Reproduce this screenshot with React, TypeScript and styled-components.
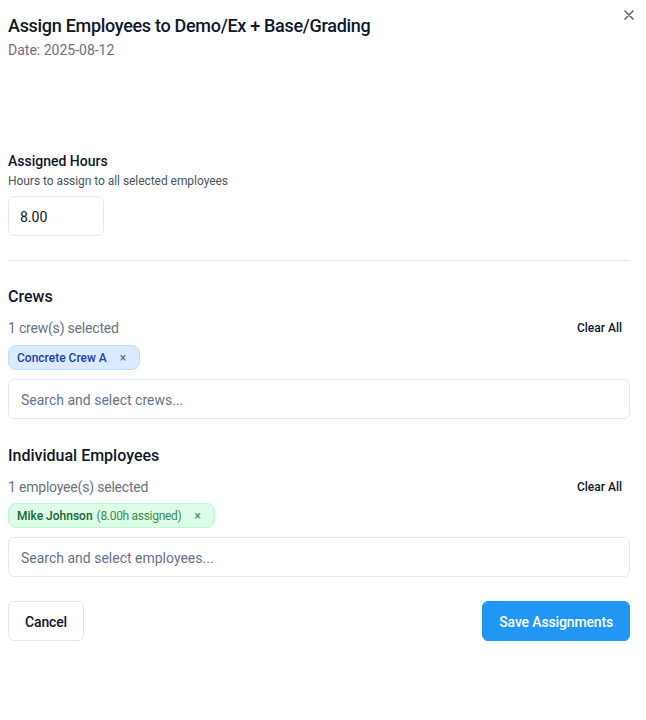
import React from "react";
import styled, { createGlobalStyle } from "styled-components";

const Global = createGlobalStyle`
  html, body { margin: 0; padding: 0; background: #ffffff; }
  body { font-family: Roboto, "Noto Sans", sans-serif; color: #0f172a; }
  * { box-sizing: border-box; }
`;

const Dialog = styled.div`
  position: relative;
  width: 646px;
  padding: 12px 16px 40px 8px;
  display: flex;
  flex-direction: column;
`;

const Close = styled.button`
  position: absolute;
  top: 7px;
  right: 9px;
  width: 16px;
  height: 16px;
  padding: 0;
  border: none;
  background: transparent;
  display: flex;
  align-items: center;
  justify-content: center;
  color: #4b5563;
`;

const Title = styled.h2`
  margin: 0;
  font-size: 18px;
  line-height: 28px;
  font-weight: 500;
  letter-spacing: -0.3px;
  color: #0f172a;
`;

const DateLine = styled.p`
  margin: 0;
  font-size: 14px;
  line-height: 20px;
  color: #6b7280;
`;

const Field = styled.div<{ $top: number }>`
  margin-top: ${(p) => p.$top}px;
  display: flex;
  flex-direction: column;
`;

const Label = styled.label`
  font-size: 14px;
  line-height: 20px;
  font-weight: 500;
  color: #0f172a;
`;

const Hint = styled.span`
  margin-top: 2px;
  font-size: 12px;
  line-height: 16px;
  letter-spacing: -0.05px;
  color: #4b5563;
`;

const HoursInput = styled.div`
  margin-top: 7px;
  width: 96px;
  height: 40px;
  border: 1px solid #e2e8f0;
  border-radius: 6px;
  padding: 1px 11px 0;
  display: flex;
  align-items: center;
  font-size: 14px;
  color: #0f172a;
`;

const Divider = styled.hr`
  margin: 24px 0 0;
  border: none;
  border-top: 1px solid #e2e8f0;
  width: 100%;
`;

const SectionTitle = styled.h3<{ $top: number }>`
  margin: ${(p) => p.$top}px 0 0;
  font-size: 16px;
  line-height: 24px;
  font-weight: 500;
  color: #0f172a;
`;

const CountRow = styled.div<{ $top: number }>`
  margin-top: ${(p) => p.$top}px;
  display: flex;
  align-items: center;
  justify-content: space-between;
  height: 20px;
`;

const Count = styled.span`
  font-size: 14px;
  line-height: 20px;
  letter-spacing: -0.2px;
  color: #6b7280;
`;

const ClearAll = styled.button`
  border: none;
  background: transparent;
  padding: 0 8px 0 0;
  font-family: inherit;
  font-size: 12px;
  font-weight: 500;
  color: #0f172a;
`;

const Chips = styled.div<{ $top: number }>`
  margin-top: ${(p) => p.$top}px;
  display: flex;
  flex-wrap: wrap;
  gap: 8px;
`;

const Chip = styled.span<{ $tone: "blue" | "green" }>`
  display: inline-flex;
  align-items: center;
  height: 25px;
  padding: 1px 13px 0 8px;
  border-radius: 8px;
  font-size: 12px;
  font-weight: 500;
  background: ${(p) => (p.$tone === "blue" ? "#dbeafe" : "#dcfce7")};
  border: 1px solid ${(p) => (p.$tone === "blue" ? "#bfdbfe" : "#bbf7d0")};
  color: ${(p) => (p.$tone === "blue" ? "#1e40af" : "#166534")};
`;

const ChipNote = styled.span`
  margin-left: 4px;
  font-weight: 400;
  letter-spacing: -0.3px;
  color: #3f8a55;
`;

const ChipX = styled.span`
  margin-left: 13px;
  font-size: 12px;
  font-weight: 400;
  opacity: 0.8;
`;

const Search = styled.div<{ $top: number }>`
  margin-top: ${(p) => p.$top}px;
  height: 40px;
  width: 100%;
  border: 1px solid #e2e8f0;
  border-radius: 6px;
  padding: 2px 12px 0;
  display: flex;
  align-items: center;
  font-size: 14px;
  color: #64748b;
`;

const Footer = styled.div`
  margin-top: 24px;
  display: flex;
  justify-content: space-between;
`;

const Button = styled.button<{ $primary?: boolean }>`
  height: 40px;
  padding: 1px 16px 0;
  border-radius: 6px;
  font-family: inherit;
  font-size: 14px;
  font-weight: 500;
  letter-spacing: -0.15px;
  border: 1px solid ${(p) => (p.$primary ? "#2196f3" : "#e2e8f0")};
  background: ${(p) => (p.$primary ? "#2196f3" : "#ffffff")};
  color: ${(p) => (p.$primary ? "#ffffff" : "#0f172a")};
`;

export default function App() {
  return (
    <>
      <Global />
      <Dialog>
        <Close aria-label="Close">
          <svg width="12" height="12" viewBox="0 0 12 12" fill="none" stroke="currentColor" strokeWidth="1.4" strokeLinecap="round">
            <path d="M2 2l8 8M10 2l-8 8" />
          </svg>
        </Close>
        <Title>Assign Employees to Demo/Ex + Base/Grading</Title>
        <DateLine>Date: 2025-08-12</DateLine>

        <Field $top={91}>
          <Label>Assigned Hours</Label>
          <Hint>Hours to assign to all selected employees</Hint>
          <HoursInput>8.00</HoursInput>
        </Field>

        <Divider />

        <SectionTitle $top={24}>Crews</SectionTitle>
        <CountRow $top={9}>
          <Count>1 crew(s) selected</Count>
          <ClearAll>Clear All</ClearAll>
        </CountRow>
        <Chips $top={7}>
          <Chip $tone="blue">
            Concrete Crew A<ChipX>×</ChipX>
          </Chip>
        </Chips>
        <Search $top={9}>Search and select crews...</Search>

        <SectionTitle $top={25}>Individual Employees</SectionTitle>
        <CountRow $top={9}>
          <Count>1 employee(s) selected</Count>
          <ClearAll>Clear All</ClearAll>
        </CountRow>
        <Chips $top={6}>
          <Chip $tone="green">
            Mike Johnson<ChipNote>(8.00h assigned)</ChipNote>
            <ChipX>×</ChipX>
          </Chip>
        </Chips>
        <Search $top={9}>Search and select employees...</Search>

        <Footer>
          <Button>Cancel</Button>
          <Button $primary>Save Assignments</Button>
        </Footer>
      </Dialog>
    </>
  );
}
